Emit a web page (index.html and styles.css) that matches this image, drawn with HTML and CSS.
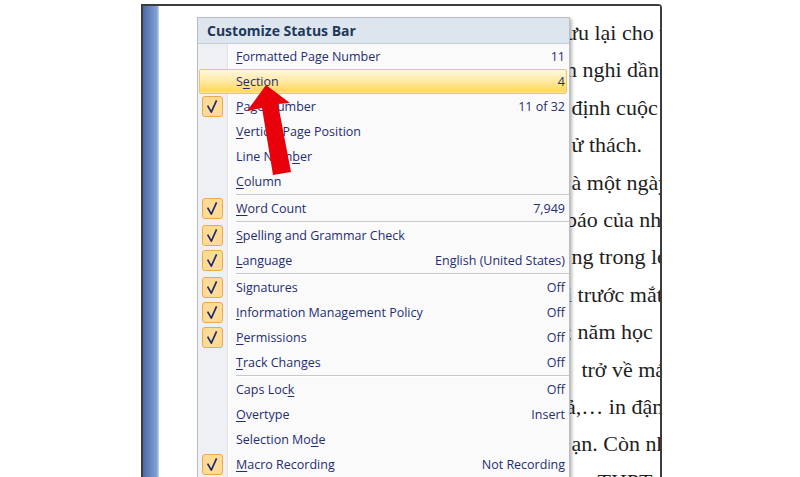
FILE: index.html
```html
<!DOCTYPE html>
<html lang="en">
<head>
  <meta charset="UTF-8">
  <title>Customize Status Bar</title>
  <link rel="stylesheet" href="styles.css">
</head>
<body>
  <div class="screen">
    <!-- Word document page behind the menu -->
    <div class="frame">
      <div class="ruler"></div>
      <div class="page">
        <div class="text">
          <p>ưu lại cho thấy</p>
          <p>n nghi dần dần</p>
          <p>&nbsp;định cuộc đời</p>
          <p>&nbsp;ử thách.</p>
          <p>&nbsp;à một ngày</p>
          <p>báo của nhà</p>
          <p>&nbsp;ng trong lớp</p>
          <p>i trước mắt</p>
          <p>; năm học</p>
          <p>&nbsp;&nbsp;&thinsp;trở về mái</p>
          <p>ả,… in đậm</p>
          <p>&nbsp;ạn. Còn nhiều</p>
          <p>&nbsp;&nbsp;&thinsp;– THPT</p>
        </div>
      </div>
    </div>

    <!-- Status bar context menu -->
    <div class="menu">
      <div class="menu-title">Customize Status Bar</div>
      <div class="menu-body">
        <div class="item"><span class="gut"></span><span class="label"><u>F</u>ormatted Page Number</span><span class="value">11</span></div>
        <div class="item hot"><span class="gut"></span><span class="label">S<u>e</u>ction</span><span class="value">4</span></div>
        <div class="item"><span class="gut"><span class="check"></span></span><span class="label"><u>P</u>age Number</span><span class="value">11 of 32</span></div>
        <div class="item"><span class="gut"></span><span class="label"><u>V</u>ertical Page Position</span><span class="value"></span></div>
        <div class="item"><span class="gut"></span><span class="label">Line Num<u>b</u>er</span><span class="value"></span></div>
        <div class="item"><span class="gut"></span><span class="label"><u>C</u>olumn</span><span class="value"></span></div>
        <div class="sep"></div>
        <div class="item"><span class="gut"><span class="check"></span></span><span class="label"><u>W</u>ord Count</span><span class="value">7,949</span></div>
        <div class="sep"></div>
        <div class="item"><span class="gut"><span class="check"></span></span><span class="label"><u>S</u>pelling and Grammar Check</span><span class="value"></span></div>
        <div class="item"><span class="gut"><span class="check"></span></span><span class="label"><u>L</u>anguage</span><span class="value">English (United States)</span></div>
        <div class="sep"></div>
        <div class="item"><span class="gut"><span class="check"></span></span><span class="label">Si<u>g</u>natures</span><span class="value">Off</span></div>
        <div class="item"><span class="gut"><span class="check"></span></span><span class="label"><u>I</u>nformation Management Policy</span><span class="value">Off</span></div>
        <div class="item"><span class="gut"><span class="check"></span></span><span class="label"><u>P</u>ermissions</span><span class="value">Off</span></div>
        <div class="item"><span class="gut"></span><span class="label"><u>T</u>rack Changes</span><span class="value">Off</span></div>
        <div class="sep"></div>
        <div class="item"><span class="gut"></span><span class="label">Caps Loc<u>k</u></span><span class="value">Off</span></div>
        <div class="item"><span class="gut"></span><span class="label"><u>O</u>vertype</span><span class="value">Insert</span></div>
        <div class="item"><span class="gut"></span><span class="label">Selection Mo<u>d</u>e</span><span class="value"></span></div>
        <div class="item"><span class="gut"><span class="check"></span></span><span class="label"><u>M</u>acro Recording</span><span class="value">Not Recording</span></div>
        <div class="sep"></div>
      </div>
    </div>

    <!-- Red pointer arrow -->
    <svg class="arrow" width="800" height="477" viewBox="0 0 800 477">
      <polygon points="266,85 290,103 278,104 291,172 273,175 262,108 247,111" fill="#e8000b"/>
    </svg>
  </div>
</body>
</html>
```

FILE: styles.css
```css
body {
  margin: 0;
  background: #fff;
}
.screen {
  position: relative;
  width: 800px;
  height: 477px;
  overflow: hidden;
}

/* document page */
.frame {
  display: flex;
  width: 517px;
  height: 480px;
  margin: 4px 0 0 141px;
  border: 2px solid #3c3c3c;
  border-bottom: 0;
  border-top-right-radius: 4px;
}
.ruler {
  width: 16px;
  background: linear-gradient(to right, #4a6aa6, #809fd4 85%, #c9d6ee);
}
.page {
  flex: 1;
  overflow: hidden;
  background: #fff;
}
.text {
  padding: 8px 0 0 407px;
  font-family: "Liberation Serif", serif;
  font-size: 22px;
  line-height: 37.4px;
  color: #1e1e1e;
  white-space: nowrap;
}
.text p {
  margin: 0;
}

/* menu */
.menu {
  position: absolute;
  left: 197px;
  top: 17px;
  width: 371px;
  border: 1px solid #b9bcc2;
  background: #fafafa;
  box-shadow: 2px 2px 3px rgba(0, 0, 0, 0.28);
  font-family: "Open Sans", sans-serif;
  color: #1f2d72;
}
.menu-title {
  height: 25px;
  padding-left: 9px;
  line-height: 25px;
  font-size: 14px;
  font-weight: bold;
  color: #1e395b;
  background: #dde5ee;
  border-bottom: 1px solid #c5ccd5;
}
.menu-body {
  background: linear-gradient(to right, #eff0f3 0 29px, #e1e2e6 29px 30px, #fff 30px 31px, #fafafa 31px);
}
.item {
  position: relative;
  display: grid;
  grid-template-columns: 30px 1fr auto;
  align-items: center;
  height: 25px;
}
.item.hot::before {
  content: "";
  position: absolute;
  inset: 0 2px 0 1px;
  border: 1px solid #e3c57c;
  border-radius: 2px;
  background: linear-gradient(#fff8df, #ffeaa8 45%, #ffd862 90%, #ffe595);
}
.gut,
.label,
.value {
  position: relative;
}
.gut {
  height: 25px;
  display: flex;
  align-items: center;
}
.check {
  width: 19px;
  height: 19px;
  margin-left: 4px;
  border: 1px solid #eea84c;
  border-radius: 3px;
  background: #ffdb96 no-repeat center / 19px 19px url("data:image/svg+xml,%3Csvg xmlns='http://www.w3.org/2000/svg' viewBox='0 0 19 19'%3E%3Cpath d='M4.6 8.6 L8.3 15.2 L13.6 3.4' fill='none' stroke='%231f2d6e' stroke-width='1.7' stroke-linejoin='round'/%3E%3C/svg%3E");
}
.label {
  padding-left: 8px;
  font-size: 12.5px;
}
.label u {
  text-underline-offset: 2px;
}
.value {
  padding-right: 4px;
  font-size: 12.5px;
}
.sep {
  height: 0;
  margin-left: 38px;
  border-top: 1px solid #c8c8c8;
  border-bottom: 1px solid #fff;
}
.arrow {
  position: absolute;
  left: 0;
  top: 0;
  pointer-events: none;
}
```
